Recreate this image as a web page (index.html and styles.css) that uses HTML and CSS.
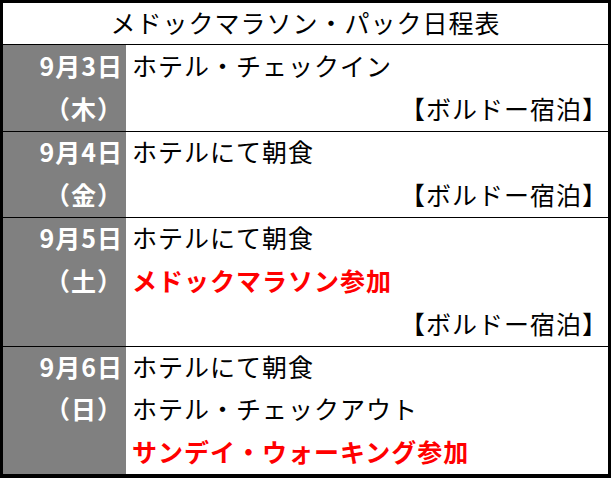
FILE: index.html
```html
<!DOCTYPE html>
<html lang="ja">
<head>
<meta charset="utf-8">
<title>メドックマラソン・パック日程表</title>
<link rel="stylesheet" href="styles.css">
</head>
<body>
<div class="sheet">
  <div class="title">メドックマラソン・パック日程表</div>
  <div class="row r2">
    <div class="date"><div class="ln">9月3日</div><div class="ln">（木）</div></div>
    <div class="cells">
      <div class="ln">ホテル・チェックイン</div>
      <div class="ln right">【ボルドー宿泊】</div>
    </div>
  </div>
  <div class="row r2b">
    <div class="date"><div class="ln">9月4日</div><div class="ln">（金）</div></div>
    <div class="cells">
      <div class="ln">ホテルにて朝食</div>
      <div class="ln right">【ボルドー宿泊】</div>
    </div>
  </div>
  <div class="row r3">
    <div class="date"><div class="ln">9月5日</div><div class="ln">（土）</div><div class="ln"></div></div>
    <div class="cells">
      <div class="ln">ホテルにて朝食</div>
      <div class="ln red">メドックマラソン参加</div>
      <div class="ln right">【ボルドー宿泊】</div>
    </div>
  </div>
  <div class="row r3b last">
    <div class="date"><div class="ln">9月6日</div><div class="ln">（日）</div><div class="ln"></div></div>
    <div class="cells">
      <div class="ln">ホテルにて朝食</div>
      <div class="ln">ホテル・チェックアウト</div>
      <div class="ln red">サンデイ・ウォーキング参加</div>
    </div>
  </div>
</div>
</body>
</html>
```
FILE: styles.css
```css
html, body {
  margin: 0;
  padding: 0;
  background: #fff;
}
.sheet {
  box-sizing: border-box;
  width: 611px;
  height: 478px;
  border: 3px solid #000;
  border-bottom-width: 4px;
  font-family: "Noto Sans CJK JP", "Noto Sans", sans-serif;
  font-size: 25px;
  letter-spacing: 1px;
  color: #000;
  display: flex;
  flex-direction: column;
}
.title {
  height: 41px;
  text-align: center;
  border-bottom: 1px solid #000;
  display: flex;
  align-items: center;
  justify-content: center;
  padding-bottom: 3px;
  box-sizing: border-box;
  height: 42px;
}
.row {
  display: grid;
  grid-template-columns: 123px 1fr;
  border-bottom: 1px solid #000;
}
.row.last {
  border-bottom: none;
}
.r2 { height: 86px; }
.r2b { height: 85px; }
.r3 { height: 128px; }
.r3b { height: 127px; }
.date {
  background: #808080;
  color: #fff;
  font-weight: bold;
  text-align: right;
  padding-right: 3px;
  display: flex;
  flex-direction: column;
}
.cells {
  display: flex;
  flex-direction: column;
  padding-left: 6px;
}
.ln {
  flex: 1;
  display: flex;
  align-items: center;
  white-space: nowrap;
  padding-bottom: 4px;
}
.date .ln {
  justify-content: flex-end;
}
.right {
  justify-content: flex-end;
}
.red {
  color: #ff0000;
  font-weight: bold;
}
```
